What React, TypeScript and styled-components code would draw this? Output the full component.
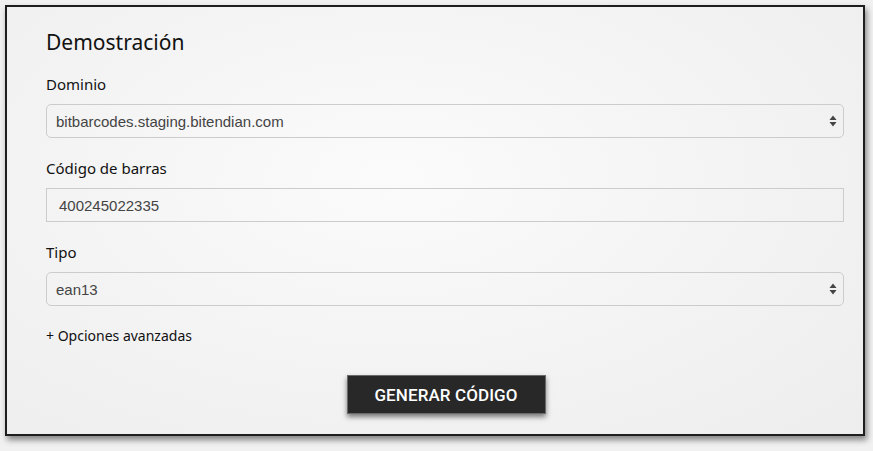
import React from "react";
import styled, { createGlobalStyle } from "styled-components";

const Global = createGlobalStyle`
  html, body { margin: 0; padding: 0; background: #f1f1f1; }
  * { box-sizing: border-box; }
`;

const Page = styled.div`
  width: 873px;
  height: 451px;
  padding: 5px 8px 15px 5px;
  background: #f1f1f1;
`;

const Panel = styled.div`
  width: 860px;
  height: 431px;
  border: 2px solid #1e1e1e;
  background: radial-gradient(ellipse at 45% 40%, #fbfbfb 0%, #f3f3f3 55%, #ededed 100%);
  box-shadow: 2px 4px 6px rgba(0, 0, 0, 0.45);
  padding: 21px 19px 0 39px;
  display: flex;
  flex-direction: column;
  font-family: "Noto Sans", "Open Sans", sans-serif;
  color: #111;
`;

const Title = styled.h2`
  margin: 0 0 18px;
  font-size: 21px;
  line-height: 28px;
  font-weight: 400;
`;

const Field = styled.div`
  display: flex;
  flex-direction: column;
  margin-bottom: 20px;
`;

const Label = styled.label`
  font-size: 15px;
  line-height: 21px;
  margin-bottom: 9px;
`;

const Control = styled.div<{ $rounded?: boolean; $pad?: number }>`
  height: 34px;
  border: 1px solid #cccccc;
  border-radius: ${(p) => (p.$rounded ? "5px" : "0")};
  display: flex;
  align-items: center;
  justify-content: space-between;
  padding: 0 6px 0 ${(p) => p.$pad ?? 9}px;
  font-family: "Liberation Sans", Arial, sans-serif;
  font-size: 15px;
  color: #444;
  background: transparent;
`;

const Arrows = () => (
  <svg width="8" height="12" viewBox="0 0 8 12">
    <path d="M4 0.5 L7.5 5 L0.5 5 Z" fill="#444" />
    <path d="M4 11.5 L7.5 7 L0.5 7 Z" fill="#444" />
  </svg>
);

const Advanced = styled.div`
  font-size: 14px;
  line-height: 20px;
  margin-bottom: 29px;
  color: #111;
`;

const ButtonRow = styled.div`
  display: flex;
  justify-content: center;
  padding-left: 2px;
`;

const Button = styled.button`
  width: 199px;
  height: 39px;
  background: #282828;
  border: 1px solid #6a6a6a;
  color: #fff;
  font-family: Roboto, "Noto Sans", sans-serif;
  font-weight: 500;
  font-size: 17px;
  letter-spacing: 0.1px;
  box-shadow: 0 3px 5px rgba(0, 0, 0, 0.5);
  cursor: pointer;
`;

export default function App() {
  return (
    <>
      <Global />
      <Page>
        <Panel>
          <Title>Demostración</Title>
          <Field>
            <Label>Dominio</Label>
            <Control $rounded>
              <span>bitbarcodes.staging.bitendian.com</span>
              <Arrows />
            </Control>
          </Field>
          <Field>
            <Label>Código de barras</Label>
            <Control $pad={12}>
              <span>400245022335</span>
            </Control>
          </Field>
          <Field>
            <Label>Tipo</Label>
            <Control $rounded>
              <span>ean13</span>
              <Arrows />
            </Control>
          </Field>
          <Advanced>+ Opciones avanzadas</Advanced>
          <ButtonRow>
            <Button>GENERAR CÓDIGO</Button>
          </ButtonRow>
        </Panel>
      </Page>
    </>
  );
}
